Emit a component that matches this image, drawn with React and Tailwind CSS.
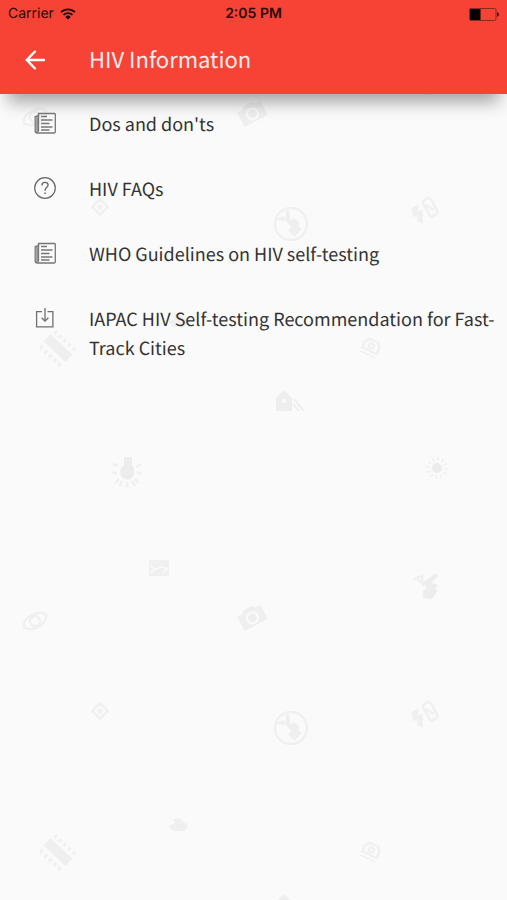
import React from 'react';

const items = [
  { id: 'dos', title: "Dos and don'ts", icon: PaperIcon },
  { id: 'faqs', title: 'HIV FAQs', icon: HelpIcon },
  { id: 'who', title: 'WHO Guidelines on HIV self-testing', icon: PaperIcon },
  { id: 'iapac', title: 'IAPAC HIV Self-testing Recommendation for Fast-Track Cities', icon: DownloadIcon },
];

function PaperIcon() {
  return (
    <svg width="24" height="24" viewBox="0 0 24 24" fill="none" stroke="#777" strokeWidth="1.3">
      <path d="M5.5 2.5h16a.8.8 0 0 1 .8.8v17.4a1.2 1.2 0 0 1-1.2 1.3H4a1.8 1.8 0 0 1-1.8-1.8V5.5l3.3-.8z" />
      <path d="M5.5 3v16a1.6 1.6 0 0 1-3.2 1M4 5.5V20" />
      <path d="M8 5.5h6M8 9h11.5M8 12.5h8.5M8 16h11.5M8 19h8.5" />
    </svg>
  );
}

function HelpIcon() {
  return (
    <svg width="24" height="24" viewBox="0 0 24 24" fill="none" stroke="#666" strokeWidth="1.2">
      <circle cx="12" cy="12" r="10.3" />
      <path d="M8.9 9.4c0-2 1.3-3.1 3.1-3.1s3.1 1.1 3.1 2.8c0 2.4-3 2.6-3 5.1v.6" strokeWidth="1.3" />
      <path d="M12.1 16.4v1.7" strokeWidth="1.5" />
    </svg>
  );
}

function DownloadIcon() {
  return (
    <svg width="24" height="24" viewBox="0 0 24 24" fill="none" stroke="#707070" strokeWidth="1.3">
      <path d="M9 5.6H3.6v15.3h16.3V5.6h-5.4" />
      <path d="M12 2v13M8.6 11.8 12 15.2l3.4-3.4" />
    </svg>
  );
}

function WifiIcon() {
  return (
    <svg width="16" height="12" viewBox="0 0 16 12" fill="none" stroke="#1d0705" strokeWidth="1.8">
      <path d="M1 4.2a10 10 0 0 1 14 0M3.5 6.9a6.4 6.4 0 0 1 9 0" />
      <path d="M8 11.6 5.3 8.9a3.9 3.9 0 0 1 5.4 0z" fill="#1d0705" stroke="none" />
    </svg>
  );
}

function BatteryIcon() {
  return (
    <svg width="30" height="13" viewBox="0 0 30 13">
      <rect x="0.5" y="0.5" width="26.5" height="12" rx="1.5" fill="none" stroke="#8b2820" />
      <rect x="1" y="1" width="10.5" height="11" fill="#000" />
      <path d="M28 4.3c1.4.3 1.8 1.2 1.8 2.2s-.4 1.9-1.8 2.2z" fill="#1d0705" />
    </svg>
  );
}

// Faint camera-themed doodles, repeated every 504px
function Wallpaper() {
  return (
    <svg className="absolute inset-0 h-full w-full" aria-hidden="true">
      <defs>
        <pattern id="doodles" width="504" height="504" patternUnits="userSpaceOnUse">
          <g fill="none" stroke="#f0f0f0" strokeWidth="2.4">
            {/* eye */}
            <g transform="translate(35 117) rotate(-28)">
              <path d="M-13 0C-8-9 8-9 13 0 8 9-8 9-13 0z" />
              <circle r="5" />
            </g>
            {/* camera */}
            <g transform="translate(252 113) rotate(-27)">
              <path d="M-13-7h6l2-3H5l2 3h6V9h-26z" fill="#efefef" stroke="none" />
              <circle r="5.5" cy="1" stroke="#fafafa" />
            </g>
            {/* focus point */}
            <g transform="translate(100 207) rotate(45)">
              <rect x="-5.5" y="-5.5" width="11" height="11" />
              <circle r="2.4" fill="#efefef" stroke="none" />
            </g>
            {/* flash off */}
            <g transform="translate(291 224)">
              <circle r="16" />
              <path d="m-14-5 7-3 2 4-4 1z" fill="#efefef" stroke="none" />
              <path d="M-5-14h3l1 9 3 2-1 5-6-4z" fill="#efefef" stroke="none" />
              <path d="m3-6 5 4v5l3 1-7 9-7-7 3-2-2-5z" fill="#efefef" stroke="none" />
            </g>
            {/* flash and frame */}
            <g transform="translate(425 210) rotate(-28)">
              <path d="M-11-8h8l-4 6h5l-6 13-4-4 3-6h-5z" fill="#efefef" stroke="none" />
              <rect x="1.5" y="-9" width="9" height="18" rx="3" />
              <path d="m3-4 5 8" />
            </g>
            {/* dish */}
            <path d="M169 323c1-3 4-3 6-4l-2-3c4-3 9-2 11 3 3 0 4 2 4 4l-4 4h-11z" fill="#efefef" stroke="none" />
            {/* film strip */}
            <g transform="translate(58 348) rotate(43)">
              <rect x="-15" y="-5" width="30" height="10" fill="#efefef" stroke="none" />
              <path d="M-14-10h29M-14 11h29" strokeWidth="4" strokeDasharray="3 3.2" />
            </g>
            {/* photo card */}
            <g transform="translate(371 347) rotate(25)">
              <path d="M-8-2-5-7H5l3 5v6H-8z" />
              <circle r="2.5" cy="-1" />
              <path d="M-8 8H8" strokeWidth="1.4" />
            </g>
            {/* house */}
            <path d="M276 411v-13l8-8 8 8v13z" fill="#eeeeee" stroke="none" />
            <path d="m294 399 10 12M293 404l6 7" strokeWidth="2" />
            <path d="M284 399v4" stroke="#fafafa" strokeWidth="3" />
            {/* bulb */}
            <g transform="translate(127 472)">
              <path d="M-3-15h8v8c3 3 3 10-1 13-2 2-5 2-8 0-4-3-4-10 1-13z" fill="#ececec" stroke="none" />
              <path d="m-9-6-5-2M-10 1h-5M-8 7l-4 4M0 10v5M8 7l4 4M10 1h5M9-5l5-3M-5 9l-2 5M5 9l3 5" strokeWidth="2.6" />
            </g>
            {/* sun */}
            <g transform="translate(437 468)">
              <circle r="5" fill="#ececec" stroke="none" />
              <circle r="9" strokeWidth="3.5" strokeDasharray="1.6 3.1" />
            </g>
            {/* ticket */}
            <path d="M149 56h20v16h-20z" fill="#f0f0f0" stroke="none" />
            <path d="M150 61q5 6 9 3t9 3M150 69l7-5M163 69l5-6" stroke="#fafafa" strokeWidth="1.5" />
            {/* auto flash */}
            <path d="m413 75 9-3 1 10M417 74l4 5" />
            <path d="m436 69 2 3-7 7 7 2-3 4 3 1-6 9-9-1v-8l4-1-4-7 4-2z" fill="#ededed" stroke="none" />
          </g>
        </pattern>
      </defs>
      <rect width="100%" height="100%" fill="url(#doodles)" />
    </svg>
  );
}

export default function App() {
  return (
    <div className="relative min-h-screen bg-[#fafafa] font-['Noto_Sans_CJK_SC','Noto_Sans',sans-serif] [text-rendering:geometricPrecision]">
      <Wallpaper />

      {/* Header */}
      <header className="relative bg-[#f64336] shadow-[0_16px_16px_-8px_rgba(0,0,0,0.35)]">
        <div className="grid h-7 grid-cols-3 items-center px-2 font-['Inter',sans-serif] text-[14px] leading-4 text-[#2b0a07]">
          <div className="flex items-center gap-1.5">
            <span>Carrier</span>
            <WifiIcon />
          </div>
          <span className="text-center font-semibold">2:05 PM</span>
          <div className="flex justify-end">
            <BatteryIcon />
          </div>
        </div>
        <div className="flex h-[66px] items-center pb-0.5">
          <button type="button" aria-label="Back" className="ml-6 mr-[41px] flex size-6 items-center justify-center">
            <svg width="24" height="24" viewBox="0 0 24 24" fill="none" stroke="#fff" strokeWidth="2.4" strokeLinecap="round">
              <path d="M20 12H3M11 3.5 2.8 12l8.2 8.5" />
            </svg>
          </button>
          <h1 className="pb-0.5 text-[22px] leading-8 text-[#ffeceb]">HIV Information</h1>
        </div>
      </header>

      {/* Menu */}
      <nav className="relative">
        <ul>
          {items.map(({ id, title, icon: Icon }) => (
            <li key={id}>
              <a href={`#${id}`} className="flex items-start pt-4 pb-5 pl-[33px] pr-2">
                <span className="mr-8 mt-px shrink-0">
                  <Icon />
                </span>
                <span className="text-[18px] leading-[29px] text-[#333]">{title}</span>
              </a>
            </li>
          ))}
        </ul>
      </nav>
    </div>
  );
}
